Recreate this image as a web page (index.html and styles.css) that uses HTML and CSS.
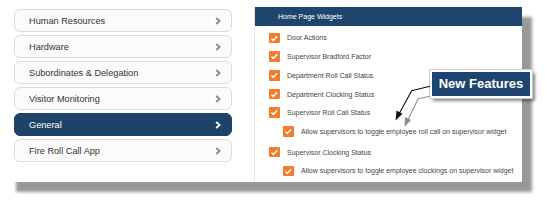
FILE: index.html
```html
<!DOCTYPE html>
<html>
<head>
<meta charset="utf-8">
<link rel="stylesheet" href="styles.css">
</head>
<body>
<div class="frame">
  <nav class="menu">
    <div class="item"><span>Human Resources</span><svg class="chev" viewBox="0 0 6 8"><polyline points="1.2,1 4.6,4 1.2,7"/></svg></div>
    <div class="item"><span>Hardware</span><svg class="chev" viewBox="0 0 6 8"><polyline points="1.2,1 4.6,4 1.2,7"/></svg></div>
    <div class="item"><span>Subordinates &amp; Delegation</span><svg class="chev" viewBox="0 0 6 8"><polyline points="1.2,1 4.6,4 1.2,7"/></svg></div>
    <div class="item"><span>Visitor Monitoring</span><svg class="chev" viewBox="0 0 6 8"><polyline points="1.2,1 4.6,4 1.2,7"/></svg></div>
    <div class="item active"><span>General</span><svg class="chev" viewBox="0 0 6 8"><polyline points="1.2,1 4.6,4 1.2,7"/></svg></div>
    <div class="item"><span>Fire Roll Call App</span><svg class="chev" viewBox="0 0 6 8"><polyline points="1.2,1 4.6,4 1.2,7"/></svg></div>
  </nav>
  <section class="panel">
    <div class="head">Home Page Widgets</div>
    <div class="rows">
      <div class="row"><span class="cb"><svg viewBox="0 0 10 10"><polyline points="2.3,5.2 4.2,7 7.8,3"/></svg></span>Door Actions</div>
      <div class="row"><span class="cb"><svg viewBox="0 0 10 10"><polyline points="2.3,5.2 4.2,7 7.8,3"/></svg></span>Supervisor Bradford Factor</div>
      <div class="row"><span class="cb"><svg viewBox="0 0 10 10"><polyline points="2.3,5.2 4.2,7 7.8,3"/></svg></span>Department Roll Call Status</div>
      <div class="row"><span class="cb"><svg viewBox="0 0 10 10"><polyline points="2.3,5.2 4.2,7 7.8,3"/></svg></span>Department Clocking Status</div>
      <div class="row"><span class="cb"><svg viewBox="0 0 10 10"><polyline points="2.3,5.2 4.2,7 7.8,3"/></svg></span>Supervisor Roll Call Status</div>
      <div class="row sub"><span class="cb"><svg viewBox="0 0 10 10"><polyline points="2.3,5.2 4.2,7 7.8,3"/></svg></span>Allow supervisors to toggle employee roll call on supervisor widget</div>
      <div class="row gap"><span class="cb"><svg viewBox="0 0 10 10"><polyline points="2.3,5.2 4.2,7 7.8,3"/></svg></span>Supervisor Clocking Status</div>
      <div class="row sub"><span class="cb"><svg viewBox="0 0 10 10"><polyline points="2.3,5.2 4.2,7 7.8,3"/></svg></span>Allow supervisors to toggle employee clockings on supervisor widget</div>
    </div>
  </section>
</div>
<div class="callout">New Features</div>
<svg class="arrows" viewBox="0 0 545 201" width="545" height="201">
  <polyline class="a-black" points="430,86.3 411.7,90.7 399,114"/>
  <polygon class="h-black" points="395.5,120.5 396.5,110.5 402.5,113.8"/>
  <polyline class="a-gray" points="430,96.3 418.3,98.7 407.5,120.5"/>
  <polygon class="h-gray" points="404.5,127 405,117 411,120"/>
</svg>
</body>
</html>
```

FILE: styles.css
```css
html, body {
  margin: 0;
  padding: 0;
  background: #ffffff;
}
body {
  width: 545px;
  height: 201px;
  overflow: hidden;
  position: relative;
  font-family: "Liberation Sans", Arial, sans-serif;
}
.frame {
  margin: 7px 0 0 6px;
  width: 516px;
  height: 175px;
  background: #ffffff;
  box-shadow: 10px 10px 3px #989898;
  display: flex;
}
.menu {
  margin-left: 8px;
  padding-top: 2px;
  width: 218px;
  display: flex;
  flex-direction: column;
  gap: 3px;
}
.item {
  box-sizing: border-box;
  height: 23px;
  border: 1px solid #dcdcdc;
  border-radius: 6px;
  background: #fbfbfb;
  display: flex;
  align-items: center;
  justify-content: space-between;
  padding: 0 10px 0 14px;
  font-size: 9.2px;
  color: #333333;
}
.item.active {
  background: #1d436b;
  border-color: #1d436b;
  color: #ffffff;
}
.chev {
  width: 6px;
  height: 8px;
  fill: none;
  stroke: #8a8a8a;
  stroke-width: 1.8;
}
.item.active .chev {
  stroke: #ffffff;
}
.panel {
  margin-left: 22px;
  flex: 1;
  border-left: 1px solid #e6e6e6;
  display: flex;
  flex-direction: column;
}
.head {
  height: 19px;
  line-height: 19px;
  background: #1d456e;
  color: #ffffff;
  font-size: 7px;
  padding-left: 23px;
}
.rows {
  padding-top: 2.6px;
  display: flex;
  flex-direction: column;
}
.row {
  height: 18.7px;
  display: flex;
  align-items: center;
  font-size: 7px;
  color: #444444;
  padding-left: 14px;
}
.row.sub {
  padding-left: 28px;
}
.row.gap {
  margin-top: 2px;
}
.cb {
  width: 10.5px;
  height: 10.5px;
  background: #f47a2c;
  border-radius: 1px;
  margin-right: 7.5px;
  display: flex;
  flex-shrink: 0;
}
.cb svg {
  width: 100%;
  height: 100%;
  fill: none;
  stroke: #ffffff;
  stroke-width: 1.4;
}
.callout {
  position: absolute;
  left: 430px;
  top: 70px;
  width: 98px;
  height: 24px;
  background: #1e4570;
  border: 2px solid #ffffff;
  outline: 1px solid #c8ccd2;
  box-shadow: 3px 3px 3px rgba(0, 0, 0, 0.45);
  color: #ffffff;
  font-weight: bold;
  font-size: 13px;
  line-height: 24px;
  text-align: center;
}
.arrows {
  position: absolute;
  left: 0;
  top: 0;
  pointer-events: none;
}
.a-black {
  fill: none;
  stroke: #111111;
  stroke-width: 1.1;
}
.h-black {
  fill: #111111;
}
.a-gray {
  fill: none;
  stroke: #8c8c8c;
  stroke-width: 1.1;
}
.h-gray {
  fill: #8c8c8c;
}
```
